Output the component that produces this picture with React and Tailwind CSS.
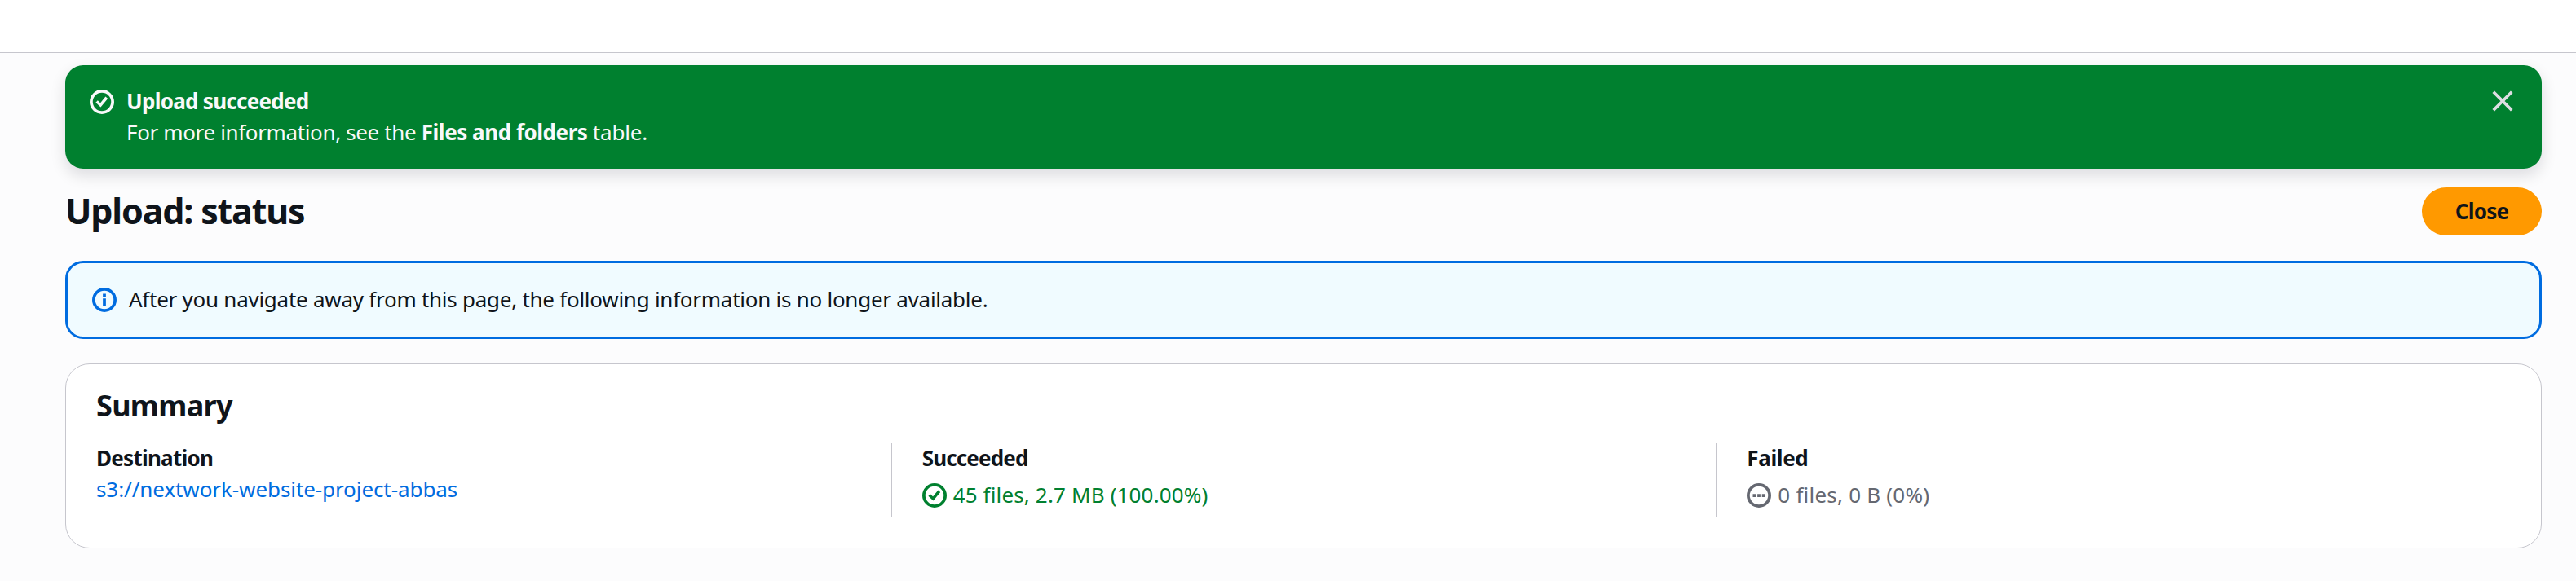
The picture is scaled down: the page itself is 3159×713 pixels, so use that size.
import React from "react";

function CheckCircle() {
  return (
    <svg className="size-[30px] shrink-0" viewBox="0 0 16 16" fill="none" stroke="currentColor" strokeWidth="2">
      <circle cx="8" cy="8" r="7" />
      <path d="M4.6 7.7 7.1 10.1l4-4.9" strokeWidth="1.9" />
    </svg>
  );
}

function InfoCircle() {
  return (
    <svg className="size-[30px] shrink-0" viewBox="0 0 16 16" fill="none" stroke="currentColor" strokeWidth="2">
      <circle cx="8" cy="8" r="7" />
      <path d="M8 7v5M8 4v2" />
    </svg>
  );
}

function DotsCircle() {
  return (
    <svg className="size-[30px] shrink-0" viewBox="0 0 16 16" fill="none" stroke="currentColor" strokeWidth="2">
      <circle cx="8" cy="8" r="7" />
      <path d="M4 8h2M7 8h2M10 8h2" />
    </svg>
  );
}

function CloseIcon() {
  return (
    <svg className="size-[30px]" viewBox="0 0 16 16" fill="none" stroke="currentColor" strokeWidth="2">
      <path d="m2 2 12 12M14 2 2 14" />
    </svg>
  );
}

export default function App() {
  return (
    <div className="h-[713px] w-[3159px] overflow-hidden bg-[#fcfcfd] font-['Noto_Sans',sans-serif] text-[26px] leading-[38px] whitespace-nowrap text-[#0f141a]">
      <header className="h-[65px] border-b border-[#c6c6cd] bg-white" />

      <main className="pt-[15px] pr-[42px] pl-[80px]">
        <section className="flex h-[127px] items-start rounded-[22px] bg-[#00802f] pt-[30px] pr-[33px] pl-[30px] text-[#f9f9fa] shadow-[0_8px_18px_1px_rgba(0,7,22,0.12)]">
          <CheckCircle />
          <div className="-mt-[5px] ml-[15px] flex-1">
            <div className="font-bold tracking-[-0.72px]">Upload succeeded</div>
            <div className="tracking-[-0.36px]">
              For more information, see the <b className="tracking-[-0.46px]">Files and folders</b>{" "}
              <span className="tracking-[-0.2px]">table.</span>
            </div>
          </div>
          <button className="-mt-[1px] text-[#dedee3]" aria-label="Dismiss">
            <CloseIcon />
          </button>
        </section>

        <div className="mt-[23px] flex h-[59px] items-center justify-between">
          <h1 className="-mt-[2px] text-[43px] leading-[56px] font-bold tracking-[-1.17px]">Upload: status</h1>
          <button className="h-[59px] w-[147px] rounded-full bg-[#ff9900] pb-[2px] font-bold tracking-[-0.8px]">Close</button>
        </div>

        <section className="mt-[31px] flex h-[96px] items-center rounded-[22px] border-[3px] border-[#006ce0] bg-[#f0fbff] pl-[30px]">
          <span className="-mt-px text-[#006ce0]">
            <InfoCircle />
          </span>
          <p className="-mt-[2px] ml-[15px] tracking-[-0.26px]">
            After you navigate away from this page, the following information is no longer available.
          </p>
        </section>

        <section className="mt-[30px] h-[227px] rounded-[30px] border border-[#c6c6cd] bg-white pt-[28px]">
          <h2 className="pl-[37px] text-[36px] leading-[46px] font-bold tracking-[-0.7px]">Summary</h2>
          <div className="mt-[23px] grid h-[90px] grid-cols-3">
            <div className="pl-[37px]">
              <div className="-mt-px font-bold tracking-[-0.74px]">Destination</div>
              <a className="block tracking-[-0.08px] text-[#006ce0]">s3://nextwork-website-project-abbas</a>
            </div>
            <div className="border-l border-[#c6c6cd] pl-[37px]">
              <div className="-mt-px font-bold tracking-[-0.85px]">Succeeded</div>
              <div className="mt-[8px] flex h-[38px] items-center gap-[8px] text-[#00802f]">
                <CheckCircle />
                <span className="-mt-[2px] tracking-[0.15px]">45 files, 2.7 MB (100.00%)</span>
              </div>
            </div>
            <div className="border-l border-[#c6c6cd] pl-[37px]">
              <div className="-mt-px font-bold tracking-[-0.38px]">Failed</div>
              <div className="mt-[8px] flex h-[38px] items-center gap-[8px] text-[#656871]">
                <DotsCircle />
                <span className="-mt-[2px] tracking-[0.22px]">0 files, 0 B (0%)</span>
              </div>
            </div>
          </div>
        </section>
      </main>
    </div>
  );
}
